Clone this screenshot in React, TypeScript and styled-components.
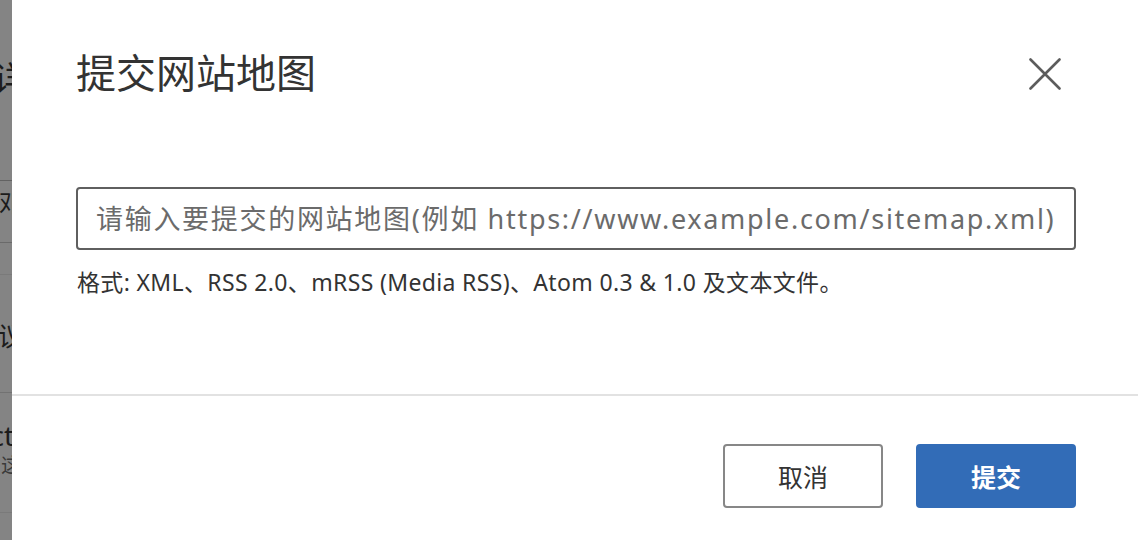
import styled, { createGlobalStyle } from 'styled-components';

const GlobalStyle = createGlobalStyle`
    html, body {
        margin: 0;
        padding: 0;
        background: #ffffff;
    }
    body {
        font-family: "Noto Sans", "Noto Sans CJK SC", sans-serif;
        color: #333333;
    }
`;

const Page = styled.div`
    display: flex;
    width: 1138px;
    height: 540px;
    overflow: hidden;
`;

// dimmed page that shows behind the overlay
const Backdrop = styled.div`
    width: 12px;
    flex: none;
    background: #848484;
    display: flex;
    flex-direction: column;
    overflow: hidden;
`;

const BackdropRow = styled.div<{ $height: number; $line?: string; $top: number }>`
    height: ${p => p.$height}px;
    flex: none;
    display: flex;
    flex-direction: column;
    align-items: flex-end;
    padding-top: ${p => p.$top}px;
    border-bottom: 1px solid ${p => p.$line || 'transparent'};
    box-sizing: border-box;
    white-space: nowrap;
`;

const BackdropText = styled.span<{ $size: number; $cut: number; $muted?: boolean }>`
    font-size: ${p => p.$size}px;
    line-height: ${p => Math.round(p.$size * 1.3)}px;
    color: ${p => (p.$muted ? '#3a3a3a' : '#1c1c1c')};
    margin-right: -${p => p.$cut}px;
`;

const Modal = styled.section`
    flex: 1;
    background: #ffffff;
    display: flex;
    flex-direction: column;
`;

const Header = styled.header`
    display: flex;
    justify-content: space-between;
    align-items: center;
    padding: 41px 76px 0 64px;
    height: 60px;
`;

const Title = styled.h2`
    margin: 0;
    font-size: 40px;
    font-weight: 400;
    line-height: 60px;
    color: #333333;
    font-family: "Noto Sans CJK SC", sans-serif;
`;

const CloseButton = styled.button`
    border: 0;
    padding: 0;
    margin-top: 5px;
    background: transparent;
    width: 34px;
    height: 34px;
    display: flex;
    align-items: center;
    justify-content: center;
    cursor: pointer;
`;

const Body = styled.div`
    padding: 86px 62px 0 64px;
    height: 207px;
`;

const UrlInput = styled.input`
    display: block;
    width: 100%;
    box-sizing: border-box;
    height: 63px;
    border: 2px solid #5f5f5f;
    border-radius: 4px;
    padding: 0 18px;
    font-family: "Noto Sans", "Noto Sans CJK SC", sans-serif;
    font-size: 27px;
    letter-spacing: 1.7px;
    color: #333333;
    outline: none;

    &::placeholder {
        color: #6b6b6b;
    }
`;

const Hint = styled.p`
    margin: 18px 0 0 1px;
    font-size: 23px;
    letter-spacing: 0.35px;
    line-height: 28px;
    color: #333333;
`;

const Footer = styled.footer`
    border-top: 2px solid #e2e2e2;
    display: flex;
    justify-content: flex-end;
    gap: 33px;
    padding: 48px 62px 0 0;
`;

const Button = styled.button<{ $primary?: boolean }>`
    width: 160px;
    height: 64px;
    box-sizing: border-box;
    border-radius: 4px;
    font-family: "Noto Sans CJK SC", sans-serif;
    font-size: 25px;
    cursor: pointer;
    border: 2px solid ${p => (p.$primary ? '#326cb7' : '#878787')};
    background: ${p => (p.$primary ? '#326cb7' : '#ffffff')};
    color: ${p => (p.$primary ? '#ffffff' : '#333333')};
    font-weight: ${p => (p.$primary ? 700 : 400)};
`;

const backdropRows = [
    { height: 181, top: 56, line: '#626262', texts: [{ text: '详', size: 34, cut: 15 }] },
    { height: 62, top: 6, line: '#6a6a6a', texts: [{ text: '邓', size: 24, cut: 11 }] },
    { height: 32, top: 0, line: '#7a7a7a', texts: [] },
    { height: 118, top: 44, line: '#727272', texts: [{ text: '议', size: 26, cut: 12 }] },
    {
        height: 120,
        top: 24,
        line: '#7a7a7a',
        texts: [
            { text: 'ct', size: 28, cut: 2 },
            { text: '这', size: 20, cut: 9, muted: true },
        ],
    },
];

export default function App() {
    return (
        <>
            <GlobalStyle />
            <Page>
                <Backdrop>
                    {backdropRows.map((row, i) => (
                        <BackdropRow key={i} $height={row.height} $line={row.line} $top={row.top}>
                            {row.texts.map(t => (
                                <BackdropText key={t.text} $size={t.size} $cut={t.cut} $muted={t.muted}>
                                    {t.text}
                                </BackdropText>
                            ))}
                        </BackdropRow>
                    ))}
                </Backdrop>
                <Modal>
                    <Header>
                        <Title>提交网站地图</Title>
                        <CloseButton aria-label="关闭">
                            <svg width="32" height="32" viewBox="0 0 32 32">
                                <path d="M1.5 1.5 L30.5 30.5 M30.5 1.5 L1.5 30.5" stroke="#5c5c5c" strokeWidth="2.6" strokeLinecap="round" />
                            </svg>
                        </CloseButton>
                    </Header>
                    <Body>
                        <UrlInput placeholder="请输入要提交的网站地图(例如 https://www.example.com/sitemap.xml)" />
                        <Hint>格式: XML、RSS 2.0、mRSS (Media RSS)、Atom 0.3 &amp; 1.0 及文本文件。</Hint>
                    </Body>
                    <Footer>
                        <Button>取消</Button>
                        <Button $primary>提交</Button>
                    </Footer>
                </Modal>
            </Page>
        </>
    );
}
